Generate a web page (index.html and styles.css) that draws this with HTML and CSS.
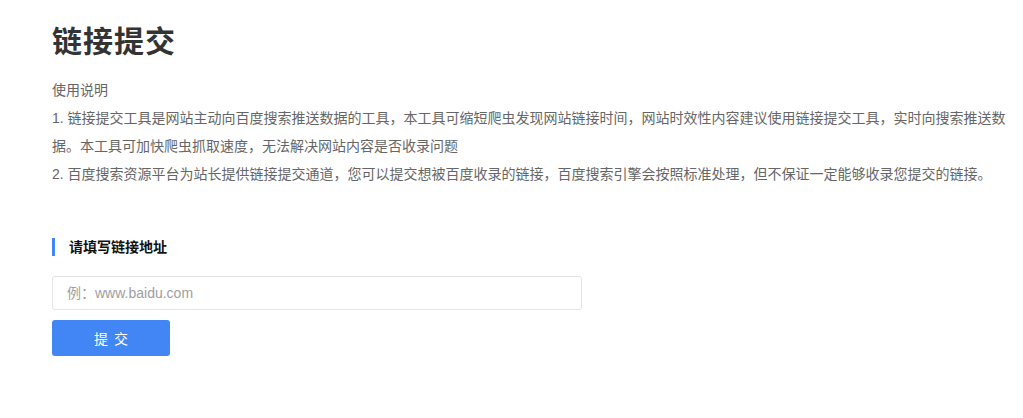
FILE: index.html
```html
<!DOCTYPE html>
<html lang="zh-CN">
<head>
<meta charset="utf-8">
<title>链接提交</title>
<link rel="stylesheet" href="styles.css">
</head>
<body>
<main class="page">
  <h1 class="title">链接提交</h1>
  <section class="desc">
    <p>使用说明</p>
    <p>1. 链接提交工具是网站主动向百度搜索推送数据的工具，本工具可缩短爬虫发现网站链接时间，网站时效性内容建议使用链接提交工具，实时向搜索推送数据。本工具可加快爬虫抓取速度，无法解决网站内容是否收录问题</p>
    <p>2. 百度搜索资源平台为站长提供链接提交通道，您可以提交想被百度收录的链接，百度搜索引擎会按照标准处理，但不保证一定能够收录您提交的链接。</p>
  </section>
  <h2 class="section-title">请填写链接地址</h2>
  <form class="submit-form">
    <input class="url-input" type="text" placeholder="例：www.baidu.com">
    <button class="submit-btn" type="button">提 交</button>
  </form>
</main>
</body>
</html>
```

FILE: styles.css
```css
html, body {
  margin: 0;
  padding: 0;
  background: #fff;
}
body {
  font-family: "Liberation Sans", "Noto Sans CJK SC", sans-serif;
  color: #666;
}
.page {
  padding: 27px 12px 0 52px;
}
.title {
  margin: 0 0 19px;
  font-size: 30px;
  line-height: 30px;
  font-weight: 700;
  color: #333;
  letter-spacing: 1px;
}
.desc {
  font-size: 14px;
  line-height: 28px;
  color: #666;
}
.desc p {
  margin: 0;
}
.section-title {
  margin: 50px 0 0;
  height: 18px;
  line-height: 18px;
  font-size: 14px;
  font-weight: 700;
  color: #111;
  border-left: 3px solid #4285f4;
  padding-left: 14px;
}
.submit-form {
  display: flex;
  flex-direction: column;
  align-items: flex-start;
  gap: 10px;
  margin-top: 20px;
}
.url-input {
  box-sizing: border-box;
  width: 530px;
  height: 34px;
  border: 1px solid #e4e4e4;
  border-radius: 3px;
  padding: 0 14px;
  font-family: "Liberation Sans", "Noto Sans CJK SC", sans-serif;
  font-size: 14px;
  color: #333;
  outline: none;
}
.url-input::placeholder {
  color: #9e9e9e;
}
.submit-btn {
  width: 118px;
  height: 36px;
  border: none;
  border-radius: 3px;
  background: #4285f4;
  color: #fff;
  font-family: "Liberation Sans", "Noto Sans CJK SC", sans-serif;
  font-size: 14px;
  letter-spacing: 1px;
  padding: 0 0 0 1px;
  cursor: pointer;
}
```
